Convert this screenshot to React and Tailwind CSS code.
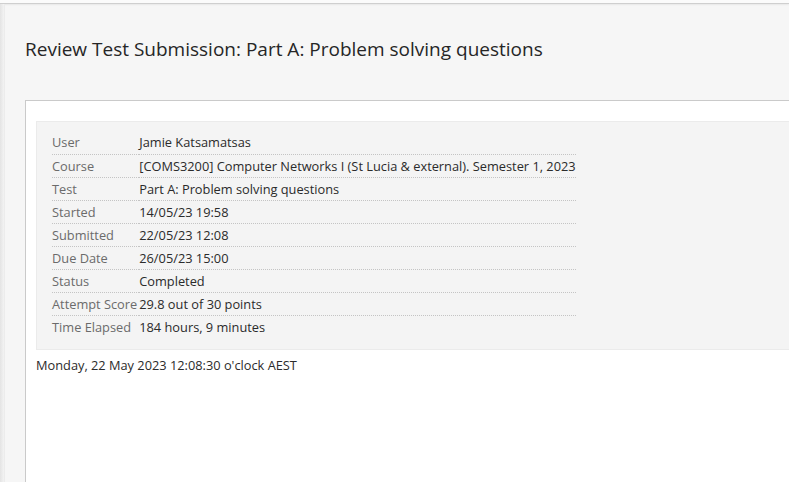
import React from "react";

const rows = [
  ["User", "Jamie Katsamatsas"],
  ["Course", "[COMS3200] Computer Networks I (St Lucia & external). Semester 1, 2023"],
  ["Test", "Part A: Problem solving questions"],
  ["Started", "14/05/23 19:58"],
  ["Submitted", "22/05/23 12:08"],
  ["Due Date", "26/05/23 15:00"],
  ["Status", "Completed"],
  ["Attempt Score", "29.8 out of 30 points"],
  ["Time Elapsed", "184 hours, 9 minutes"],
];

export default function App() {
  return (
    <div className="w-[789px] h-[482px] overflow-hidden bg-[#f6f6f6] flex flex-col font-['Open_Sans',sans-serif]">
      {/* top strip */}
      <div className="h-[4px] shrink-0 bg-[#fbfbfb] border-b border-[#cfcfcf] shadow-[0_1px_2px_rgba(0,0,0,0.06)]" />
      <div className="flex flex-1 min-h-0">
        {/* left edge */}
        <div className="w-[5px] shrink-0 bg-gradient-to-r from-[#e4e4e4] to-[#f3f3f3] border-r border-[#ececec]" />
        <div className="flex-1 flex flex-col min-w-0">
          <h1 className="pl-[20px] pt-[32px] text-[19px] leading-[27px] text-[#262626] font-normal whitespace-nowrap">
            Review Test Submission: Part A: Problem solving questions
          </h1>
          <div className="mt-[37px] ml-[20px] flex-1 bg-white border-t border-l border-[#cacaca] pl-[10px] pt-[20px]">
            <div className="bg-[#f4f4f4] border border-[#ebebeb] border-r-0 px-[15px] pt-[9px] pb-[11px]">
              <table className="text-[12.8px] leading-[22px] border-collapse">
                <tbody>
                  {rows.map(([label, value], i) => {
                    const line = i < rows.length - 1 ? "border-b border-dotted border-[#c4c4c4]" : "";
                    return (
                      <tr key={label}>
                        <td className={`p-0 pr-[2px] text-[#6b6b6b] whitespace-nowrap align-middle h-[23px] ${line}`}>{label}</td>
                        <td className={`p-0 text-[#2b2b2b] whitespace-nowrap align-middle h-[23px] ${line}`}>{value}</td>
                      </tr>
                    );
                  })}
                </tbody>
              </table>
            </div>
            <p className="mt-[6px] text-[12.8px] leading-[18px] text-[#2b2b2b]">
              Monday, 22 May 2023 12:08:30 o'clock AEST
            </p>
          </div>
        </div>
      </div>
    </div>
  );
}
